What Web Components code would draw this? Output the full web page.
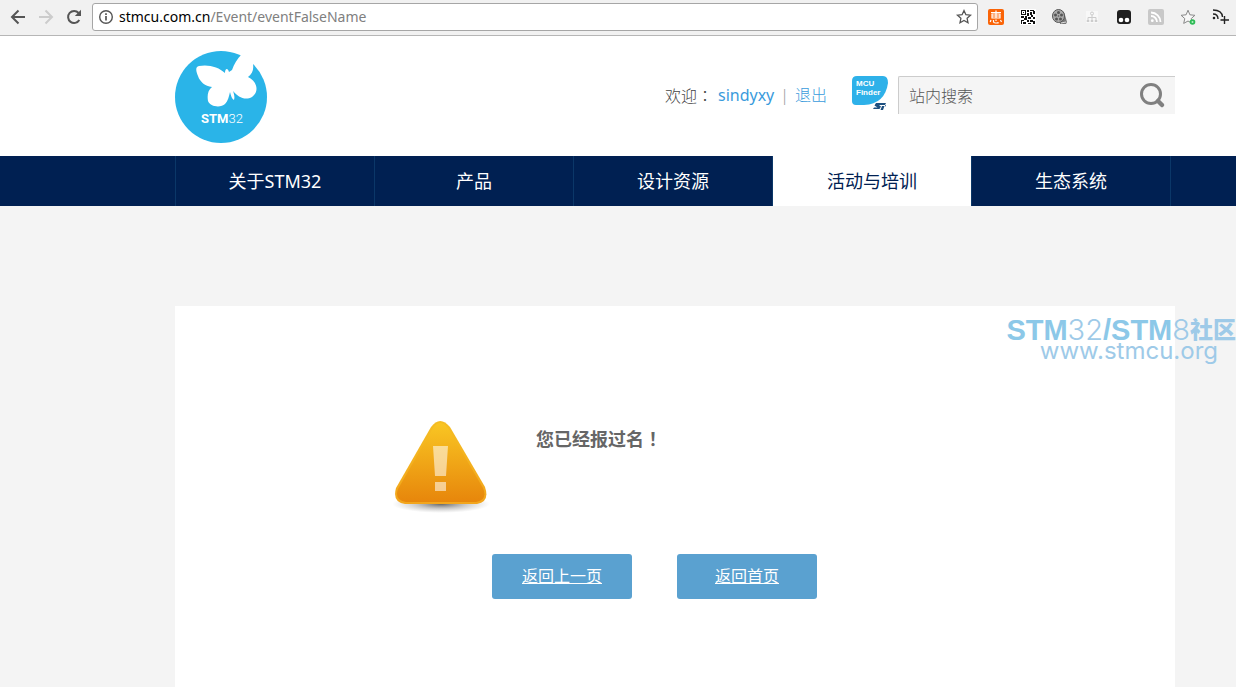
<!DOCTYPE html>
<html lang="zh-CN">
<head>
<meta charset="utf-8">
<title>STM32 活动与培训</title>
<style>
html, body { margin: 0; height: 100%; }
body { background: #f4f4f4; font-family: "Noto Sans", "Noto Sans CJK SC", sans-serif; font-size: 16px; color: #666; overflow: hidden; }
</style>
</head>
<body>
<stm-page></stm-page>
<script>
function define(name, html) {
  const t = document.createElement('template');
  t.innerHTML = html;
  customElements.define(name, class extends HTMLElement {
    constructor() {
      super();
      this.attachShadow({ mode: 'open' }).append(t.content.cloneNode(true));
    }
  });
}

define('tool-button', `
<style>
:host { display: block; flex: none; width: var(--slot, 32px); }
button { display: flex; width: 100%; height: 28px; padding: 0; border: 0; background: none; align-items: center; justify-content: center; }
::slotted(svg) { display: block; }
</style>
<button type="button"><slot></slot></button>`);

define('address-field', `
<style>
:host { display: flex; flex: 1; min-width: 0; box-sizing: border-box; height: 28px; align-items: center; padding: 0 4px 0 5px; border: 1px solid #a6a6a6; border-radius: 3px; background: #fff; }
svg { flex: none; }
.url { flex: 1; margin-left: 5px; font-family: "Noto Sans", sans-serif; font-size: 14px; line-height: 20px; color: #808080; white-space: nowrap; }
b { font-weight: 400; color: #000; }
button { padding: 0; border: 0; background: none; display: flex; }
</style>
<svg width="16" height="16" viewBox="0 0 16 16"><circle cx="8" cy="8" r="6.3" fill="none" stroke="#555" stroke-width="1.4"/><path d="M8 7v4.5M8 4.3v1.7" stroke="#555" stroke-width="1.7"/></svg>
<div class="url"><b>stmcu.com.cn</b>/Event/eventFalseName</div>
<button type="button" aria-label="收藏"><svg width="18" height="18" viewBox="0 0 18 18"><path d="M9 2.5l1.9 4.2 4.6.5-3.4 3.1.9 4.5L9 12.5l-4 2.3.9-4.5-3.4-3.1 4.6-.5z" fill="none" stroke="#555" stroke-width="1.3"/></svg></button>`);

define('browser-bar', `
<style>
:host { display: flex; align-items: center; box-sizing: border-box; height: 36px; padding: 0 0 2px 4px; background: #f1f1f1; border-bottom: 1px solid #b6b6b6; }
nav { display: flex; --slot: 28px; margin-right: 4px; }
.ext { display: flex; margin-left: 2px; }
</style>
<nav>
<tool-button><svg width="16" height="16" viewBox="0 0 16 16" fill="none" stroke="#555" stroke-width="2"><path d="M15 8H2.500M8.500 1.500L2 8l6.500 6.500"/></svg></tool-button>
<tool-button><svg width="16" height="16" viewBox="0 0 16 16" fill="none" stroke="#ccc" stroke-width="2"><path d="M1 8h12.500M7.500 1.500L14 8l-6.500 6.500"/></svg></tool-button>
<tool-button><svg width="16" height="16" viewBox="0 0 16 16"><path d="M13.300 11A6 6 0 1 1 12.600 4" fill="none" stroke="#555" stroke-width="2"/><path d="M15 .8V7H8.800z" fill="#555"/></svg></tool-button>
</nav>
<address-field></address-field>
<div class="ext">
<tool-button><svg width="16" height="16" viewBox="0 0 16 16"><rect width="16" height="16" rx="2" fill="#fa6407"/><path d="M3 3.500h10M8 1.500v7M4 5h8v4H4zM4 7h8M5.500 11v1.500q0 1.500 2 1.500h2.500v-1M3 11l-.8 2M8 10.500v1.500M12.500 11l1 2" fill="none" stroke="#fff" stroke-width="1.200"/></svg></tool-button>
<tool-button><svg width="16" height="16" viewBox="0 0 16 16"><path fill="#fff" d="M0 0h16v16H0z"/><path fill="#111" d="M1 1h5v1H1zM1 2h1v3H1zM5 2h1v3H5zM1 5h5v1H1zM3 3h1v1H3zM7 1h2v2H7zM10 1h4v1h-4zM13 2h2v3h-2zM10 3h2v3h-2zM7 4h2v3H7zM1 7h3v2H1zM5 7h2v2H5zM8 8h3v2H8zM11 6h2v2h-2zM13 8h2v2h-2zM4 9h3v2H4zM1 11h3v1H1zM1 12h1v3H1zM3 13h3v2H3zM7 11h2v2H7zM10 11h3v2h-3zM13 12h2v3h-2zM8 14h3v1H8z"/></svg></tool-button>
<tool-button><svg width="16" height="16" viewBox="0 0 16 16"><path d="M7 1q5 0 6 5l2 7-1 2H8z" fill="#777"/><ellipse cx="6.500" cy="7" rx="6" ry="6.500" fill="#aaa" stroke="#555"/><g fill="#555"><circle cx="6.500" cy="3.500" r="1.500"/><circle cx="3.500" cy="6" r="1.500"/><circle cx="9.500" cy="6" r="1.500"/><circle cx="4.500" cy="10" r="1.500"/><circle cx="8.500" cy="10" r="1.500"/><circle cx="6.500" cy="7" r=".8"/></g><path d="M9 14l5-1" stroke="#ddd"/></svg></tool-button>
<tool-button><svg width="16" height="16" viewBox="0 0 16 16"><path fill="#f8f8f8" d="M2 2h12v12H2z"/><g fill="none" stroke="#ccc"><circle cx="8" cy="4.500" r="1.500"/><path d="M8 6v6M4 11V8.500h8V11M3 11.500h2v1H3zM7 11.500h2v1H7zM11 11.500h2v1h-2z"/></g></svg></tool-button>
<tool-button><svg width="16" height="16" viewBox="0 0 16 16"><rect x="1" y="1" width="14" height="14" rx="3" fill="#1f1f1f"/><circle cx="5" cy="11" r="2.300" fill="#fff"/><circle cx="11" cy="11" r="2.300" fill="#fff"/></svg></tool-button>
<tool-button><svg width="16" height="16" viewBox="0 0 16 16"><rect width="16" height="16" rx="2" fill="#c8c8c8"/><g fill="none" stroke="#fff" stroke-width="1.800"><path d="M3 7a6 6 0 0 1 6 6M3 3.500A9.500 9.500 0 0 1 12.500 13"/></g><circle cx="4.300" cy="11.700" r="1.400" fill="#fff"/></svg></tool-button>
<tool-button><svg width="16" height="16" viewBox="0 0 16 16"><path d="M8 1.200l1.900 4.600 5 .5-3.700 3.300 1.100 4.800L8 12l-4.300 2.400 1.100-4.800L1.100 6.300l5-.5z" fill="#f8f8f8" stroke="#888"/><circle cx="12.500" cy="13" r="2.800" fill="#2dbb55"/><circle cx="12.500" cy="13" r="1" fill="#b6eec4"/></svg></tool-button>
<tool-button><svg width="18" height="18" viewBox="0 0 18 18" fill="none" stroke="#222" stroke-width="1.400"><path d="M2 6q5 0 5 5M2 2q9 0 9.500 7M13.500 8v8M9.500 12H18"/><circle cx="3" cy="10" r=".6"/></svg></tool-button>
</div>`);

define('stm-logo', `
<style>
:host { display: block; width: 92px; height: 92px; }
svg { display: block; }
text { font-family: Roboto, sans-serif; font-size: 13px; fill: #fff; }
</style>
<svg width="92" height="92" viewBox="0 0 92 92" role="img" aria-label="STM32">
<circle cx="46" cy="46" r="46" fill="#2ab4e8"/>
<path fill="#fff" d="M67 3C62 8 59 13 57 19L54 21C53 17 50 17 50 22C44 16 33 13 24 15C20 16 21 20 23 25C25 31 30 35 37 36C33 39 32 44 33 50C35 56 46 57 50 53C53 50 54 45 55 41C56 45 57 48 59 49C60 46 59 43 58 40C63 46 70 50 77 46C84 41 83 31 73 26C77 23 79 19 78 13L84 5L74 0Z"/>
<text x="26" y="72"><tspan font-weight="700">STM</tspan><tspan font-weight="300">32</tspan></text>
</svg>`);

define('mcu-finder', `
<style>
:host { display: block; width: 37px; height: 36px; }
svg { display: block; }
text { font-family: "Liberation Sans", sans-serif; font-weight: 700; font-size: 8px; fill: #fff; }
</style>
<a href="#finder"><svg width="37" height="36" viewBox="0 0 37 36">
<path d="M5 0h26q5 0 5 7Q33 28 12 29H4Q0 29 0 25V5q0-5 5-5z" fill="#2eb1e9"/>
<text x="4" y="10">MCU</text><text x="4" y="19">Finder</text>
<path d="M24 27h10l-1 2h-6l2 1.500-1.500 2.500H21l1-1.500h3.500l-3-2zM30 30h2.500L31 34h-2.500zM33 29h1l-1 2z" fill="#1d4f80"/>
</svg></a>`);

define('search-box', `
<style>
:host { display: flex; box-sizing: border-box; width: 277px; height: 38px; align-items: center; background: #f5f5f5; border: solid #ccc; border-width: 1px 0 0 1px; border-radius: 2px 0 0 0; }
input { flex: 1; min-width: 0; height: 36px; padding: 0 0 0 10px; border: 0; background: none; font: 300 16px/24px "Noto Sans", "Noto Sans CJK SC", sans-serif; color: #555; }
input::placeholder { color: #555; opacity: 1; }
button { flex: none; display: flex; padding: 0; margin-right: 9px; border: 0; background: none; }
</style>
<input type="text" placeholder="站内搜索" aria-label="站内搜索">
<button type="button" aria-label="搜索"><svg width="28" height="28" viewBox="0 0 28 28" fill="none" stroke="#808080"><circle cx="13" cy="12" r="9.500" stroke-width="3"/><path d="M20 19l4 4" stroke-width="4.500" stroke-linecap="round"/></svg></button>`);

define('site-header', `
<style>
:host { display: flex; align-items: flex-start; justify-content: space-between; box-sizing: border-box; height: 120px; padding: 15px 61px 0 175px; background: #fff; }
.tools { display: flex; align-items: flex-start; margin-top: 25px; }
.user { margin-right: 25px; display: flex; line-height: 38px; font-weight: 300; color: #444; white-space: nowrap; }
a { color: #3a9bdc; text-decoration: none; }
.name { margin-left: 5px; font-weight: 400; }
.bar { margin: 0 6px; color: #999; }
.wide { font-family: "Noto Sans CJK TC", sans-serif; }
search-box { margin-left: 9px; }
</style>
<stm-logo></stm-logo>
<div class="tools">
<div class="user"><span>欢迎<span class="wide" lang="zh-TW">：</span></span><a class="name" href="#user">sindyxy</a><span class="bar">|</span><a href="#logout">退出</a></div>
<mcu-finder></mcu-finder>
<search-box></search-box>
</div>`);

define('nav-tab', `
<style>
:host { display: block; flex: none; box-sizing: border-box; width: 199px; border-left: 1px solid #0b3768; }
a { display: block; text-align: center; font-size: 18px; line-height: 50px; color: #fff; text-decoration: none; }
:host([active]) { background: #fff; }
:host([active]) a { color: #002052; }
</style>
<a href="#section"><slot></slot></a>`);

define('site-nav', `
<style>
:host { display: flex; height: 50px; padding-left: 175px; background: #002052; }
i { flex: 1; border-left: 1px solid #0b3768; }
</style>
<nav-tab>关于STM32</nav-tab><nav-tab>产品</nav-tab><nav-tab>设计资源</nav-tab><nav-tab active>活动与培训</nav-tab><nav-tab>生态系统</nav-tab><i></i>`);

define('link-button', `
<style>
:host { display: block; width: 140px; }
a { display: block; border-radius: 3px; background: #5aa1d0; text-align: center; font-size: 16px; line-height: 45px; color: #fff; text-decoration: underline; }
</style>
<a href="#back"><slot></slot></a>`);

define('warning-icon', `
<style>:host, svg { display: block; }</style>
<svg width="98" height="94" viewBox="0 0 98 94" role="img" aria-label="警告">
<defs><linearGradient id="g" x2="0" y2="1"><stop stop-color="#f9c623"/><stop offset="1" stop-color="#e7860b"/></linearGradient>
<linearGradient id="e" x2="0" y2="1"><stop stop-color="#f5bd22"/><stop offset="1" stop-color="#f2a51c"/></linearGradient>
<radialGradient id="s"><stop stop-color="#555" stop-opacity=".9"/><stop offset=".5" stop-color="#777" stop-opacity=".4"/><stop offset="1" stop-color="#999" stop-opacity="0"/></radialGradient></defs>
<ellipse cx="48" cy="84" rx="49" ry="9" fill="url(#s)"/>
<path d="M38 7Q47-5 57 7L92 67Q97 82 84 84H12Q-1 82 3 68Z" fill="url(#e)"/>
<path d="M40 8Q47-2 55 8L90 68Q95 80 83 82H13Q1 80 5 69Z" fill="url(#g)"/>
<path d="M40 26h15l-2 30H42zM42 62h11v9H42z" fill="#fff" fill-opacity=".55"/>
</svg>`);

define('notice-panel', `
<style>
:host { display: block; box-sizing: border-box; margin: 100px 61px 0 175px; padding-top: 114px; min-height: 381px; background: #fff; }
.message { display: flex; padding-left: 218px; }
p { margin: 6px 0 0 45px; font-size: 18px; line-height: 24px; font-weight: 700; color: #666; }
.wide { font-family: "Noto Sans CJK TC", sans-serif; }
.actions { display: flex; gap: 45px; margin-top: 40px; padding-left: 317px; }
</style>
<div class="message"><warning-icon></warning-icon><p>您已经报过名<span class="wide" lang="zh-TW">！</span></p></div>
<div class="actions"><link-button>返回上一页</link-button><link-button>返回首页</link-button></div>`);

define('site-watermark', `
<style>
:host { display: block; position: absolute; top: 316px; right: 0; font-family: "Liberation Sans", "Noto Sans CJK SC", sans-serif; color: #9ecae8; white-space: nowrap; pointer-events: none; }
div { display: flex; align-items: center; font-size: 29px; line-height: 28px; }
b { color: #8cc8e8; }
span { font-family: Inter, sans-serif; font-weight: 300; }
.cn { font-size: 23px; font-weight: 900; color: #9ecae8; }
p { margin: -5px 18px 0 0; text-align: right; font: 400 24px/24px Inter, sans-serif; }
</style>
<div><b>STM</b><span>32</span><b>/STM</b><span>8</span><b class="cn">社区</b></div>
<p>www.stmcu.org</p>`);

define('stm-page', `
<style>
:host { display: flex; flex-direction: column; min-height: 100%; position: relative; }
notice-panel { flex: 1; }
</style>
<browser-bar></browser-bar>
<site-header></site-header>
<site-nav></site-nav>
<notice-panel></notice-panel>
<site-watermark></site-watermark>`);
</script>
</body>
</html>
